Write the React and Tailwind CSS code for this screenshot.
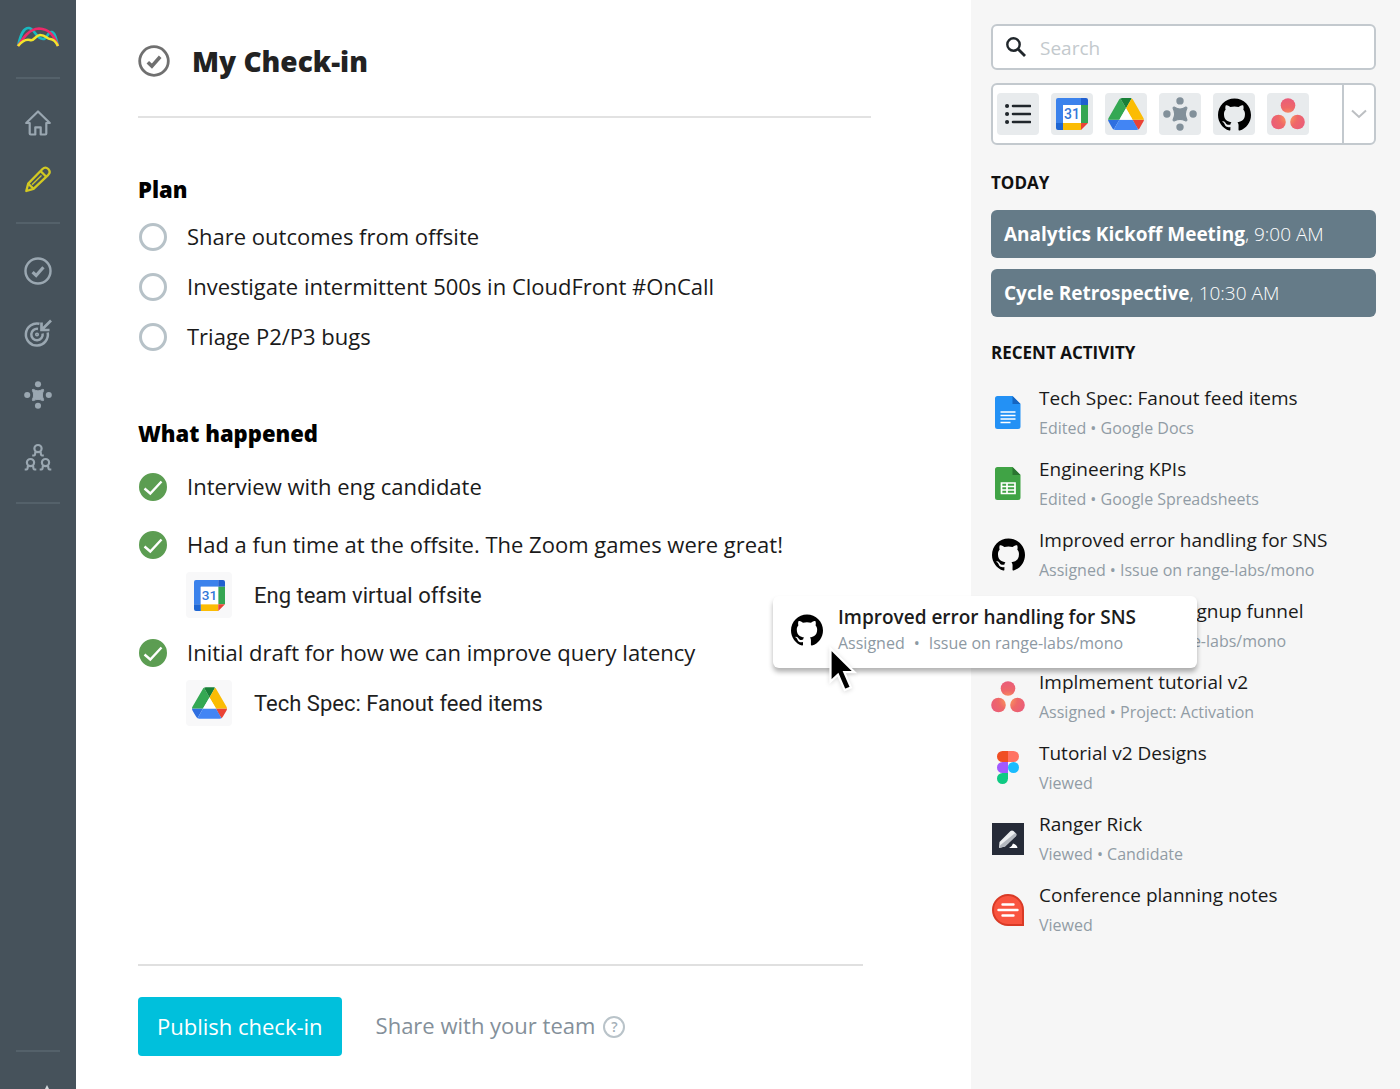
import React from "react";

const GITHUB =
  "M12 .297c-6.63 0-12 5.373-12 12 0 5.303 3.438 9.8 8.205 11.385.6.113.82-.258.82-.577 0-.285-.01-1.04-.015-2.04-3.338.724-4.042-1.61-4.042-1.61C4.422 18.07 3.633 17.7 3.633 17.7c-1.087-.744.084-.729.084-.729 1.205.084 1.838 1.236 1.838 1.236 1.07 1.835 2.809 1.305 3.495.998.108-.776.417-1.305.76-1.605-2.665-.3-5.466-1.332-5.466-5.93 0-1.31.465-2.38 1.235-3.22-.135-.303-.54-1.523.105-3.176 0 0 1.005-.322 3.3 1.23.96-.267 1.98-.399 3-.405 1.02.006 2.04.138 3 .405 2.28-1.552 3.285-1.23 3.285-1.23.645 1.653.24 2.873.12 3.176.765.84 1.23 1.91 1.23 3.22 0 4.61-2.805 5.625-5.475 5.92.42.36.81 1.096.81 2.22 0 1.606-.015 2.896-.015 3.286 0 .315.21.69.825.57C20.565 22.092 24 17.592 24 12.297c0-6.627-5.373-12-12-12";

function Github({ className }) {
  return (
    <svg className={className} viewBox="0 0 24 24" fill="#000" aria-hidden="true">
      <path d={GITHUB} />
    </svg>
  );
}

function Calendar({ className }) {
  return (
    <svg className={className} viewBox="0 0 32 32" aria-hidden="true">
      <path d="M2 0h23v7H7v18H0V2a2 2 0 0 1 2-2z" fill="#3b82ec" />
      <path d="M25 0h5a2 2 0 0 1 2 2v5h-7z" fill="#1f5fd0" />
      <path d="M25 7h7v18h-7z" fill="#35a652" />
      <path d="M7 25h18v7H7z" fill="#fbbc04" />
      <path d="M0 25h7v7H2a2 2 0 0 1-2-2z" fill="#1f66d2" />
      <path d="M25 25h7l-7 7z" fill="#ea4335" />
      <path d="M7 7h18v18H7z" fill="#fff" />
      <text x="16" y="21" textAnchor="middle" fontSize="14" fontWeight="500" fontFamily="Roboto, sans-serif" fill="#3478d8">
        31
      </text>
    </svg>
  );
}

function Drive({ className }) {
  return (
    <svg className={className} viewBox="0 0 87.3 78" aria-hidden="true">
      <path d="m6.6 66.85 3.85 6.65c.8 1.4 1.95 2.5 3.3 3.3L27.5 53H0c0 1.55.4 3.1 1.2 4.5z" fill="#2f6fe0" />
      <path d="M43.65 25 29.9 1.2c-1.35.8-2.5 1.9-3.3 3.3l-25.4 44A9.06 9.06 0 0 0 0 53h27.5z" fill="#34a853" />
      <path d="M73.55 76.8c1.35-.8 2.5-1.9 3.3-3.3l1.6-2.75 7.65-13.25c.8-1.4 1.2-2.95 1.2-4.5H59.8l5.85 11.5z" fill="#ea4335" />
      <path d="M43.65 25 57.4 1.2C56.05.4 54.5 0 52.9 0H34.4c-1.6 0-3.15.45-4.5 1.2z" fill="#188038" />
      <path d="M59.8 53H27.5L13.75 76.8c1.35.8 2.9 1.2 4.5 1.2h50.8c1.6 0 3.15-.45 4.5-1.2z" fill="#4285f4" />
      <path d="m73.4 26.5-12.7-22c-.8-1.4-1.95-2.5-3.3-3.3L43.65 25 59.8 53h27.45c0-1.55-.4-3.1-1.2-4.5z" fill="#fbbc04" />
      <path d="M43.65 25 59.8 53H27.5z" fill="#fff" />
    </svg>
  );
}

function Meeting({ className }) {
  return (
    <svg className={className} viewBox="0 0 34 34" fill="currentColor" aria-hidden="true">
      <path d="M10.200 11.500Q9.800 9.800 11.500 10.200 14.500 12 17 12T22.500 10.200Q24.200 9.800 23.800 11.500 22.300 14.500 22.300 17T23.800 22.500Q24.200 24.200 22.500 23.800 19.500 22.300 17 22.300T11.500 23.800Q9.800 24.200 10.200 22.500 11.700 19.500 11.700 17T10.200 11.500z" stroke="currentColor" strokeWidth="1.200" strokeLinejoin="round" />
      <circle cx="17" cy="3.900" r="3.700" />
      <circle cx="17" cy="30.100" r="3.700" />
      <circle cx="3.900" cy="17" r="3.700" />
      <circle cx="30.100" cy="17" r="3.700" />
    </svg>
  );
}

function Asana({ className }) {
  return (
    <svg className={className} viewBox="0 0 34 32" aria-hidden="true">
      <defs>
        <radialGradient id="coral" gradientUnits="userSpaceOnUse" cx="17" cy="19" r="19">
          <stop offset="0" stopColor="#fca05a" />
          <stop offset=".5" stopColor="#ef6868" />
          <stop offset="1" stopColor="#e95c7b" />
        </radialGradient>
      </defs>
      <g fill="url(#coral)">
        <circle cx="17" cy="7.500" r="7.300" />
        <circle cx="7.500" cy="24" r="7.300" />
        <circle cx="26.500" cy="24" r="7.300" />
      </g>
    </svg>
  );
}

function Docs({ className }) {
  return (
    <svg className={className} viewBox="0 0 26 33" aria-hidden="true">
      <path d="M2.500 0H17.500L25.500 8v22.500a2.500 2.500 0 0 1-2.500 2.500H2.500A2.500 2.500 0 0 1 0 30.500v-28A2.500 2.500 0 0 1 2.500 0z" fill="#2391f5" />
      <path d="M17.500 0v8h8z" fill="#1565c0" />
      <path d="M5.500 16h15M5.500 19.500h15M5.500 23h15M5.500 26.500h10" stroke="#fff" strokeWidth="1.700" />
    </svg>
  );
}

function Sheets({ className }) {
  return (
    <svg className={className} viewBox="0 0 26 33" aria-hidden="true">
      <path d="M2.500 0H17.500L25.500 8v22.500a2.500 2.500 0 0 1-2.500 2.500H2.500A2.500 2.500 0 0 1 0 30.500v-28A2.500 2.500 0 0 1 2.500 0z" fill="#40a345" />
      <path d="M17.500 0v8h8z" fill="#2a7530" />
      <path d="M6.500 16h13.500v10.500H6.500zM6.500 19.500H20M6.500 23H20M12 16v10.500" fill="none" stroke="#fff" strokeWidth="1.700" />
    </svg>
  );
}

function Figma({ className }) {
  return (
    <svg className={className} viewBox="0 0 22 33" aria-hidden="true">
      <path d="M5.500 0H11v11H5.500a5.500 5.500 0 0 1 0-11z" fill="#f04e23" />
      <path d="M11 0h5.500a5.500 5.500 0 0 1 0 11H11z" fill="#ff7262" />
      <path d="M5.500 11H11v11H5.500a5.500 5.500 0 0 1 0-11z" fill="#a259ff" />
      <circle cx="16.500" cy="16.500" r="5.500" fill="#1abcfe" />
      <path d="M5.500 22H11v5.500A5.500 5.500 0 1 1 5.500 22z" fill="#0fca83" />
    </svg>
  );
}

function Lever({ className }) {
  return (
    <svg className={className} viewBox="0 0 32 32" aria-hidden="true">
      <path d="M0 0h32v32H0z" fill="#262b38" />
      <path d="M7.500 19 18.500 8q1.500-1 3 0l2.500 2.500q1 1.500 0 2.500L13 23.500 7 25z" fill="#eceef0" />
      <path d="M7 25l1.500-3L23.500 9.800q1.500 1.700.5 3.200L13 23.500z" fill="#b4b8bf" />
      <path d="M17 25q3-1 4-4.500 4 1 4.500 4.500z" fill="#fff" />
    </svg>
  );
}

function Quip({ className }) {
  return (
    <svg className={className} viewBox="0 0 32 32" aria-hidden="true">
      <path d="M16 1a15 15 0 0 1 15 15v15H16a15 15 0 0 1 0-30z" fill="#f9543f" stroke="#d93a26" strokeWidth="2" />
      <path d="M10.500 10.500h11M6.500 16h19M10.500 21.500h11" stroke="#fff" strokeWidth="2.400" strokeLinecap="round" />
    </svg>
  );
}

function CheckCircle({ className }) {
  return (
    <svg className={className} viewBox="0 0 32 32" fill="none" stroke="currentColor" aria-hidden="true">
      <circle cx="16" cy="16" r="14.300" strokeWidth="2.800" />
      <path d="m9.800 17.200 4.100 3.900 8.300-9.300" strokeWidth="3.600" />
    </svg>
  );
}

function Logo() {
  return (
    <svg className="h-6 w-11" viewBox="0 0 44 24" fill="none" strokeWidth="2.600" aria-hidden="true">
      <path d="M2 21C5 8 8 2.500 13 3c6 1 7 11 14 11 5 0 4-8 9-7 4 1 4 8 6 14" stroke="#19b8c0" />
      <path d="M2 21C6 15 12 4 23 3.500 33 4 38 10 42 21" stroke="#ec2a6a" />
      <path d="M2 21c4-5 8-7 12-6 4 2 5-5 10-5 6 0 7 4 10 4 4 0 6 3 8 7" stroke="#f2e52b" />
    </svg>
  );
}

function Home() {
  return (
    <svg className="size-7" viewBox="0 0 28 28" fill="none" stroke="currentColor" strokeWidth="2.200" strokeLinejoin="round" aria-hidden="true">
      <path d="M14 2.500 2.200 14h3.500v10.500q0 1 1 1h4.600v-7.200h5.400v7.200h4.600q1 0 1-1V14h3.500z" />
    </svg>
  );
}

function Pencil() {
  return (
    <svg className="size-7 text-[#d3c922]" viewBox="0 0 28 28" fill="none" stroke="currentColor" strokeWidth="2.300" strokeLinejoin="round" aria-hidden="true">
      <path d="M18.500 4q2.800-2.800 5.800 0 2.800 3 0 5.800L9.500 23.800 2.300 26l1.900-7.400z" />
      <path d="m16.500 6 5.500 5.500M4.200 18.600l5.300 5.200" />
      <path d="M17.500 10.500l-9.500 9.300" strokeWidth="1.300" />
    </svg>
  );
}

function Target() {
  return (
    <svg className="size-7" viewBox="0 0 28 28" fill="none" stroke="currentColor" strokeWidth="2.500" aria-hidden="true">
      <path d="M15.500 4.800A11 11 0 1 0 23.700 13.500M14 9.900a5.700 5.700 0 1 0 4.600 4.600" />
      <circle cx="13" cy="15.500" r=".8" />
      <path d="M27 1.500 18 10.500M17.500 3.500v7.500h8" strokeWidth="2.700" />
    </svg>
  );
}

function Person({ x, y }) {
  return (
    <g transform={`translate(${x} ${y})`}>
      <circle cx="5.500" cy="4.600" r="3.600" />
      <path d="M-.3 11.500h1.800q1.200 0 1.400-3.800M11.300 11.500H9.500q-1.200 0-1.400-3.800" />
    </g>
  );
}

function Team() {
  return (
    <svg className="size-7" viewBox="0 0 28 28" fill="none" stroke="currentColor" strokeWidth="2.200" aria-hidden="true">
      <Person x={8.5} y={1} />
      <Person x={1} y={15} />
      <Person x={16} y={15} />
    </svg>
  );
}

function Divider() {
  return <hr className="w-11 border-0 border-t-2 border-[#54616a]" />;
}

function NavLink({ label, children }) {
  return (
    <a href="#" aria-label={label} className="text-[#9aa7b1]">
      {children}
    </a>
  );
}

function Sidebar() {
  return (
    <nav className="flex w-[76px] shrink-0 flex-col items-center bg-[#46525b] pt-[25px]">
      <NavLink label="Range">
        <Logo />
      </NavLink>
      <div className="mt-7 mb-[30px]">
        <Divider />
      </div>
      <div className="flex flex-col gap-7">
        <NavLink label="Home">
          <Home />
        </NavLink>
        <NavLink label="Write check-in">
          <Pencil />
        </NavLink>
      </div>
      <div className="mt-[29px] mb-[33px]">
        <Divider />
      </div>
      <div className="flex flex-col gap-[34px]">
        <NavLink label="Check-ins">
          <CheckCircle className="size-7" />
        </NavLink>
        <NavLink label="Goals">
          <Target />
        </NavLink>
        <NavLink label="Meetings">
          <Meeting className="size-7" />
        </NavLink>
        <NavLink label="Teams">
          <Team />
        </NavLink>
      </div>
      <div className="mt-[31px]">
        <Divider />
      </div>
      <div className="mt-auto flex flex-col items-center">
        <Divider />
        <div className="flex h-[37px] w-11 items-end justify-center pl-[18px]">
          <svg className="h-1 w-2" viewBox="0 0 8 4" aria-hidden="true">
            <path d="M4 0l2 4H2z" fill="#d5dade" />
          </svg>
        </div>
      </div>
    </nav>
  );
}

function Task({ text, done, attachment }) {
  const id = text.replace(/\W+/g, "-").toLowerCase();
  return (
    <li>
      <div className="flex h-[50px] items-center">
        <span className="mr-[19px] grid w-[30px] place-items-center">
          <input
            id={id}
            type="checkbox"
            defaultChecked={done}
            className="peer col-start-1 row-start-1 size-7 appearance-none rounded-full border-[3px] border-[#b7c2c8] bg-white checked:border-[#5c9d52] checked:bg-[#5c9d52]"
          />
          <svg
            className="pointer-events-none invisible col-start-1 row-start-1 size-7 peer-checked:visible"
            viewBox="0 0 28 28"
            fill="none"
            stroke="#fff"
            strokeWidth="2.400"
            aria-hidden="true"
          >
            <path d="m5.500 15.500 5.800 5L22.500 8.500" />
          </svg>
        </span>
        <label htmlFor={id} className="pb-0.5 text-[22px] whitespace-nowrap text-[#1a1a1a]">
          {text}
        </label>
      </div>
      {attachment && (
        <a href="#" className="ml-12 flex h-[50px] items-center gap-[22px]">
          <span className="grid size-[46px] place-items-center rounded-sm bg-[#f8f8f9]">{attachment.icon}</span>
          <span className="font-[Roboto,sans-serif] text-[22px] text-[#1f1f1f]">{attachment.text}</span>
        </a>
      )}
    </li>
  );
}

const PLAN = ["Share outcomes from offsite", "Investigate intermittent 500s in CloudFront #OnCall", "Triage P2/P3 bugs"];

const HAPPENED = [
  { text: "Interview with eng candidate" },
  {
    text: "Had a fun time at the offsite. The Zoom games were great!",
    attachment: { icon: <Calendar className="size-[31px]" />, text: "Eng team virtual offsite" },
  },
  {
    text: "Initial draft for how we can improve query latency",
    attachment: { icon: <Drive className="h-8 w-[35px]" />, text: "Tech Spec: Fanout feed items" },
  },
];

function CheckIn() {
  return (
    <main className="flex min-w-0 flex-1 flex-col bg-white pr-[100px] pb-[33px] pl-[62px]">
      <header className="flex h-[118px] items-center gap-[22px] border-b-2 border-[#e2e2e2] pt-1.5">
        <CheckCircle className="size-8 text-[#707070]" />
        <h1 className="text-[28px] font-extrabold text-[#222]">My Check-in</h1>
      </header>
      <section className="mt-[55px]">
        <h2 className="text-[22px] leading-8 font-extrabold text-black">Plan</h2>
        <ul className="mt-[7px]">
          {PLAN.map((t) => (
            <Task key={t} text={t} />
          ))}
        </ul>
      </section>
      <section className="mt-[55px]">
        <h2 className="text-[22px] leading-8 font-extrabold text-black">What happened</h2>
        <ul className="mt-[13px] flex flex-col gap-2">
          {HAPPENED.map((t) => (
            <Task key={t.text} {...t} done />
          ))}
        </ul>
      </section>
      <footer className="mt-auto mr-2 border-t-2 border-[#e0e0e0] pt-[31px]">
        <div className="flex items-center">
          <button className="h-[59px] rounded bg-[#00c0dc] px-[19px] text-[22px] text-white">Publish check-in</button>
          <span className="ml-[34px] pb-0.5 text-[22px] text-[#84909a]">Share with your team</span>
          <button
            aria-label="Help"
            className="ml-2 grid size-[22px] place-items-center rounded-full border-2 border-[#b9c3c9] text-sm leading-none font-semibold text-[#a4afb7]"
          >
            ?
          </button>
        </div>
      </footer>
    </main>
  );
}

const FILTERS = [
  {
    label: "All items",
    icon: (
      <svg className="h-[22px] w-[26px]" viewBox="0 0 26 22" stroke="#20262b" strokeWidth="2.600" strokeLinecap="round" aria-hidden="true">
        <path d="M8 3h17M8 11h17M8 19h17" />
        <path d="M2 3h.1M2 11h.1M2 19h.1" strokeWidth="4" />
      </svg>
    ),
  },
  { label: "Google Calendar", icon: <Calendar className="size-8" /> },
  { label: "Google Drive", icon: <Drive className="h-8 w-9" /> },
  { label: "Meetings", icon: <Meeting className="size-[34px] text-[#82909a]" /> },
  { label: "GitHub", icon: <Github className="size-[33px]" /> },
  { label: "Asana", icon: <Asana className="h-8 w-[34px]" /> },
];

const MEETINGS = [
  ["Analytics Kickoff Meeting", "9:00 AM"],
  ["Cycle Retrospective", "10:30 AM"],
];

const ACTIVITY = [
  { icon: <Docs className="h-[33px]" />, title: "Tech Spec: Fanout feed items", meta: "Edited • Google Docs" },
  { icon: <Sheets className="h-[33px]" />, title: "Engineering KPIs", meta: "Edited • Google Spreadsheets" },
  { icon: <Github className="size-[33px]" />, title: "Improved error handling for SNS", meta: "Assigned • Issue on range-labs/mono" },
  { icon: <Github className="size-[33px]" />, title: "Implement new signup funnel", meta: "Merged • PR on range-labs/mono" },
  { icon: <Asana className="h-8 w-[34px]" />, title: "Implmement tutorial v2", meta: "Assigned • Project: Activation" },
  { icon: <Figma className="h-[33px]" />, title: "Tutorial v2 Designs", meta: "Viewed" },
  { icon: <Lever className="size-8" />, title: "Ranger Rick", meta: "Viewed • Candidate" },
  { icon: <Quip className="size-8" />, title: "Conference planning notes", meta: "Viewed" },
];

function DragCard() {
  return (
    <div className="absolute top-[596px] -left-[198px] flex h-[72px] w-[424px] items-center rounded-md bg-white pb-1 pl-[18px] shadow-[0_4px_5px_rgba(0,0,0,0.3)]">
      <Github className="size-8 shrink-0" />
      <div className="ml-[15px] whitespace-nowrap">
        <p className="text-[19px] leading-[26px] font-semibold text-[#1c1c1c]">Improved error handling for SNS</p>
        <p className="flex gap-[9px] text-base leading-[26px] text-[#8d99a3]">
          <span>Assigned</span>
          <span>•</span>
          <span>Issue on range-labs/mono</span>
        </p>
      </div>
      <svg className="absolute top-[50px] left-[55px] h-12 w-8 drop-shadow-sm" viewBox="0 0 32 48" aria-hidden="true">
        <path d="M2.500 2.500v33l7.500-6.800 6.700 15.400 6.200-2.700-6.600-15.200H26.500z" fill="#000" stroke="#fff" strokeWidth="2.200" />
      </svg>
    </div>
  );
}

function Activity() {
  return (
    <aside className="relative w-[429px] shrink-0 bg-[#f6f6f6] pt-6 pr-6 pl-5">
      <div className="flex h-[46px] items-center gap-[13px] rounded-md border-2 border-[#c3c9ce] bg-white pl-3">
        <svg className="size-[22px] shrink-0" viewBox="0 0 22 22" fill="none" stroke="#20262b" aria-hidden="true">
          <circle cx="8.500" cy="8.500" r="6.200" strokeWidth="2.400" />
          <path d="m13 13 7 7" strokeWidth="2.800" />
        </svg>
        <input
          type="search"
          aria-label="Search"
          placeholder="Search"
          className="min-w-0 flex-1 bg-transparent pt-0.5 text-[19px] outline-none placeholder:text-[#c3c9cd]"
        />
      </div>
      <div className="mt-[13px] flex h-[62px] rounded-md border-2 border-[#c3c9ce] bg-white">
        <div className="flex flex-1 items-center gap-3 pl-1">
          {FILTERS.map((f) => (
            <button key={f.label} aria-label={f.label} className="grid size-[42px] place-items-center rounded bg-[#e8ebed]">
              {f.icon}
            </button>
          ))}
        </div>
        <button aria-label="More filters" className="grid w-8 place-items-center border-l-2 border-[#c3c9ce]">
          <svg className="h-[10px] w-4" viewBox="0 0 16 10" fill="none" stroke="#bcbfc2" strokeWidth="2" aria-hidden="true">
            <path d="m1 1.500 7 6.500 7-6.500" />
          </svg>
        </button>
      </div>

      <h2 className="mt-[26px] text-[17px] leading-6 font-bold text-[#111]">TODAY</h2>
      <ul className="mt-[15px] flex flex-col gap-[11px]">
        {MEETINGS.map(([name, time]) => (
          <li key={name} className="flex h-12 items-center rounded-md bg-[#657b88] px-[13px] text-[19px] whitespace-pre text-white">
            <strong className="font-bold">{name}</strong>
            <span className="font-light">, {time}</span>
          </li>
        ))}
      </ul>

      <h2 className="mt-6 text-[17px] leading-6 font-bold text-[#111]">RECENT ACTIVITY</h2>
      <ul className="mt-[11px]">
        {ACTIVITY.map((a) => (
          <li key={a.title} className="flex h-[71px] items-center gap-3.5 whitespace-nowrap">
            <span className="mt-0.5 grid w-[34px] place-items-center">{a.icon}</span>
            <div>
              <a href="#" className="block text-[19px] leading-8 text-[#1a1a1a]">
                {a.title}
              </a>
              <p className="text-base leading-7 text-[#919ca5]">{a.meta}</p>
            </div>
          </li>
        ))}
      </ul>
      <DragCard />
    </aside>
  );
}

export default function App() {
  return (
    <div className="flex min-h-screen overflow-hidden bg-white font-['Open_Sans','Noto_Sans',sans-serif]">
      <Sidebar />
      <CheckIn />
      <Activity />
    </div>
  );
}
